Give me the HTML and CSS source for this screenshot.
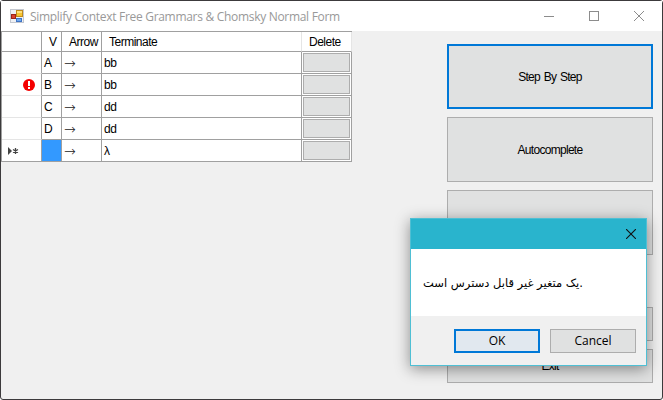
FILE: index.html
```
<!DOCTYPE html>
<html lang="en">

<head>
    <meta charset="UTF-8">
    <meta name="viewport" content="width=device-width, initial-scale=1.0">
    <title>Simplify Context Free Grammars &amp; Chomsky Normal Form</title>
    <link rel="stylesheet" href="styles.css">
</head>

<body>
    <div class="window">
        <div class="titlebar">
            <svg class="app-icon" width="14" height="14" viewBox="0 0 14 14">
                <rect x="0.5" y="0.5" width="13" height="13" fill="#eef0f4" stroke="#c3c7cf" />
                <rect x="6.5" y="1.5" width="6" height="6" fill="#f7c531" stroke="#c08a1c" />
                <rect x="7" y="2" width="5" height="2" fill="#ffe07a" />
                <rect x="1.5" y="5.5" width="4" height="4" fill="#d8402f" stroke="#9c2318" />
                <rect x="6.5" y="9.5" width="5" height="3" fill="#6fa8ef" stroke="#3f74c4" />
            </svg>
            <span class="title">Simplify Context Free Grammars &amp; Chomsky Normal Form</span>
            <div class="controls">
                <svg width="10" height="10"><path d="M0 5.5H10" stroke="#8c8c8c" /></svg>
                <svg width="10" height="10"><rect x="0.5" y="0.5" width="9" height="9" fill="none" stroke="#8c8c8c" /></svg>
                <svg width="10" height="10"><path d="M0 0L10 10M10 0L0 10" stroke="#8c8c8c" /></svg>
            </div>
        </div>
        <div class="content">
            <table class="grid">
                <colgroup>
                    <col class="col-head">
                    <col class="col-v">
                    <col class="col-arrow">
                    <col class="col-term">
                    <col class="col-del">
                </colgroup>
                <tr class="head">
                    <th></th>
                    <th>V</th>
                    <th>Arrow</th>
                    <th>Terminate</th>
                    <th>Delete</th>
                </tr>
                <tr>
                    <td class="row-head"></td>
                    <td>A</td>
                    <td class="arrow">→</td>
                    <td>bb</td>
                    <td class="del"><button></button></td>
                </tr>
                <tr>
                    <td class="row-head error">
                        <svg width="12" height="12" viewBox="0 0 12 12">
                            <circle cx="6" cy="6" r="6" fill="#f40000" />
                            <path d="M5 2H7V7H5ZM5 8H7V10H5Z" fill="#fff" />
                        </svg>
                    </td>
                    <td>B</td>
                    <td class="arrow">→</td>
                    <td>bb</td>
                    <td class="del"><button></button></td>
                </tr>
                <tr>
                    <td class="row-head"></td>
                    <td>C</td>
                    <td class="arrow">→</td>
                    <td>dd</td>
                    <td class="del"><button></button></td>
                </tr>
                <tr>
                    <td class="row-head"></td>
                    <td>D</td>
                    <td class="arrow">→</td>
                    <td>dd</td>
                    <td class="del"><button></button></td>
                </tr>
                <tr>
                    <td class="row-head current">
                        <svg width="11" height="8" viewBox="0 0 11 8">
                            <path d="M0 0L4 4L0 8Z" fill="#444" />
                            <path d="M7.5 1V7M5 2.5L10 5.5M10 2.5L5 5.5" stroke="#444" stroke-width="1.3" />
                        </svg>
                    </td>
                    <td class="selected"></td>
                    <td class="arrow">→</td>
                    <td>λ</td>
                    <td class="del"><button></button></td>
                </tr>
            </table>
            <div class="actions">
                <button class="action focused">Step By Step</button>
                <button class="action">Autocomplete</button>
                <button class="action"></button>
                <button class="action small first"></button>
                <button class="action small">Exit</button>
            </div>
        </div>
    </div>

    <div class="dialog">
        <div class="dialog-title">
            <svg width="10" height="10"><path d="M0 0L10 10M10 0L0 10" stroke="#111" stroke-width="1.1" /></svg>
        </div>
        <div class="message">یک متغیر غیر قابل دسترس است.</div>
        <div class="dialog-footer">
            <button class="dialog-button default">OK</button>
            <button class="dialog-button">Cancel</button>
        </div>
    </div>
</body>

</html>
```
FILE: styles.css
```
* {
    margin: 0;
    padding: 0;
    box-sizing: border-box;
}

body {
    width: 663px;
    height: 400px;
    overflow: hidden;
    background-color: white;
    font-family: "Liberation Sans", sans-serif;
    font-size: 12px;
    letter-spacing: -0.5px;
    color: black;
}

.window {
    width: 663px;
    height: 400px;
    border: 1px solid #3c3a3c;
    border-radius: 3px;
    background-color: #f0f0f0;
}

.titlebar {
    height: 30px;
    display: flex;
    align-items: center;
    padding: 0 18px 0 9px;
    background-color: white;
}

.title {
    margin-left: 6px;
    font-family: "Open Sans", sans-serif;
    font-size: 12px;
    letter-spacing: -0.3px;
    color: #999999;
    white-space: nowrap;
}

.controls {
    display: flex;
    gap: 35px;
    margin-left: auto;
}

.content {
    display: flex;
    justify-content: space-between;
    padding-right: 9px;
}

.grid {
    width: 351px;
    height: 131px;
    table-layout: fixed;
    border-collapse: separate;
    border-spacing: 0;
    border-top: 1px solid #a0a0a0;
    border-left: 1px solid #a0a0a0;
    background-color: white;
}

.col-head {
    width: 40px;
}

.col-v {
    width: 20px;
}

.col-arrow {
    width: 40px;
}

.col-term {
    width: 200px;
}

.col-del {
    width: 50px;
}

.grid tr {
    height: 22px;
}

.grid .head {
    height: 20px;
}

.grid th,
.grid td {
    padding-top: 2px;
    border-right: 1px solid #a0a0a0;
    border-bottom: 1px solid #a0a0a0;
    font-weight: normal;
    text-align: left;
    vertical-align: middle;
    line-height: 13px;
}

.grid th {
    padding-left: 7px;
}

.grid th:nth-child(4),
.grid th:last-child {
    border-right-color: #e5e5e5;
}

.grid td {
    padding-left: 2px;
}

.grid .row-head {
    padding-top: 0;
    border-bottom-color: #e5e5e5;
}

.grid tr:last-child .row-head {
    border-bottom-color: #a0a0a0;
}

.grid .error {
    padding-left: 21px;
}

.grid .current {
    padding-left: 6px;
}

.grid svg {
    display: block;
}

.grid .arrow {
    padding-top: 1px;
    font-family: "DejaVu Sans", sans-serif;
    font-size: 14px;
    font-weight: 200;
    color: #222222;
}

.grid .selected {
    background-color: #3399ff;
}

.grid .del {
    padding: 1px;
}

.del button {
    display: block;
    width: 47px;
    height: 19px;
    border: 1px solid #adadad;
    background-color: #e0e1e1;
}

.actions {
    width: 206px;
    padding-top: 13px;
    display: flex;
    flex-direction: column;
    gap: 8px;
}

.action {
    height: 65px;
    border: 1px solid #adadad;
    background-color: #e0e1e1;
    font-family: "Liberation Sans", sans-serif;
    font-size: 12px;
    letter-spacing: -0.7px;
    word-spacing: 1px;
}

.focused {
    border: 2px solid #0078d7;
}

.small {
    height: 34px;
}

.first {
    margin-top: 44px;
}

/* message box over the main window */
.dialog {
    position: absolute;
    left: 410px;
    top: 218px;
    width: 237px;
    height: 148px;
    display: flex;
    flex-direction: column;
    border: 1px solid #4fbfd4;
    background-color: white;
    box-shadow: 0 3px 14px rgba(0, 0, 0, 0.42);
}

.dialog-title {
    height: 30px;
    display: flex;
    justify-content: flex-end;
    align-items: center;
    padding-right: 10px;
    background-color: #29b4cd;
}

.message {
    height: 67px;
    padding-left: 12px;
    line-height: 68px;
    font-family: "DejaVu Sans", sans-serif;
    font-size: 11.5px;
    letter-spacing: 0;
    white-space: nowrap;
}

.dialog-footer {
    flex: 1;
    display: flex;
    justify-content: flex-end;
    gap: 10px;
    padding: 13px 10px 0 0;
    background-color: #f0f0f0;
}

.dialog-button {
    width: 86px;
    height: 24px;
    border: 1px solid #adadad;
    background-color: #e0e1e1;
    font-family: "Open Sans", sans-serif;
    font-size: 12px;
    line-height: 18px;
    padding-bottom: 1px;
}

.default {
    border: 2px solid #0078d7;
    background-color: #e1e8ef;
}
```
